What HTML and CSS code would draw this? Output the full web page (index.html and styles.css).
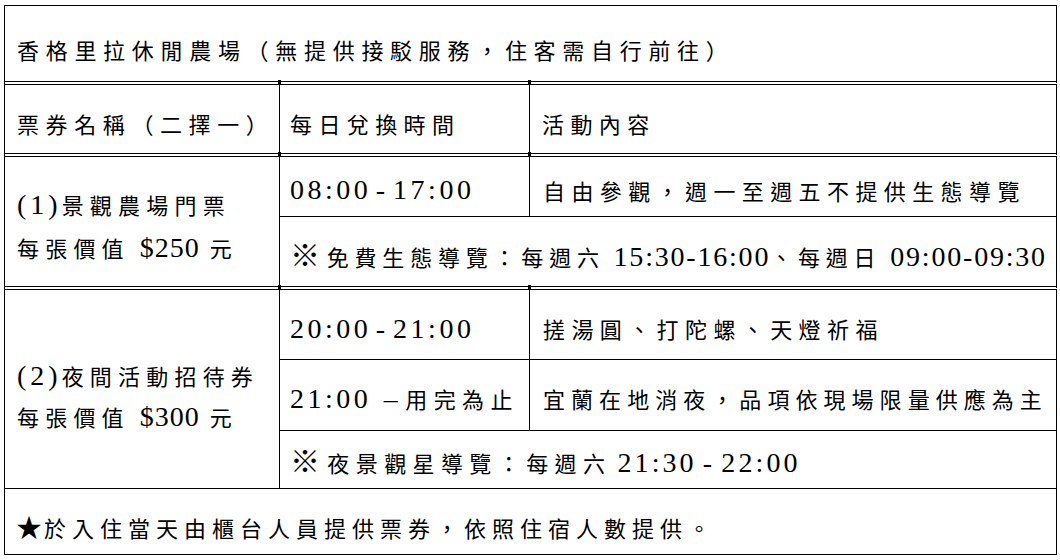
FILE: index.html
```html
<!DOCTYPE html>
<html lang="zh-Hant">
<head>
<meta charset="utf-8">
<title>香格里拉休閒農場</title>
<link rel="stylesheet" href="styles.css">
</head>
<body>
<div class="sheet">
  <div class="cell full title"><div class="tx">香格里拉休閒農場（無提供接駁服務，住客需自行前往）</div></div>

  <div class="cell head c1 dot-tr dot-br"><div class="tx">票券名稱（二擇一）</div></div>
  <div class="cell head c2 dot-tr dot-br"><div class="tx">每日兌換時間</div></div>
  <div class="cell head c3"><div class="tx">活動內容</div></div>

  <div class="cell name b1"><div class="tx"><p><span class="en">(1)</span>景觀農場門票</p><p>每張價值<span class="en"> $250 </span>元</p></div></div>
  <div class="cell time t1"><div class="tx"><span class="en">08:00 - 17:00</span></div></div>
  <div class="cell act a1"><div class="tx">自由參觀，週一至週五不提供生態導覽</div></div>
  <div class="cell note n1"><div class="tx"><span class="mark">※</span> 免費生態導覽：每週六<span class="en"> 15:30-16:00</span>、每週日<span class="en"> 09:00-09:30</span></div></div>

  <div class="cell name b2 dot-tr"><div class="tx"><p><span class="en">(2)</span>夜間活動招待券</p><p>每張價值<span class="en"> $300 </span>元</p></div></div>
  <div class="cell time t2 dot-tr"><div class="tx"><span class="en">20:00 - 21:00</span></div></div>
  <div class="cell act a2"><div class="tx">搓湯圓、打陀螺、天燈祈福</div></div>
  <div class="cell time t3"><div class="tx"><span class="en">21:00 –</span>用完為止</div></div>
  <div class="cell act a3"><div class="tx">宜蘭在地消夜，品項依現場限量供應為主</div></div>
  <div class="cell note n2"><div class="tx"><span class="mark">※</span> 夜景觀星導覽：每週六<span class="en"> 21:30 - 22:00</span></div></div>

  <div class="cell full foot"><div class="tx"><span class="star">★</span>於入住當天由櫃台人員提供票券，依照住宿人數提供。</div></div>
</div>
</body>
</html>
```

FILE: styles.css
```css
html, body {
  margin: 0;
  padding: 0;
  background: #fff;
}

.sheet {
  display: grid;
  grid-template-columns: 275px 250px 527px;
  grid-template-rows: 79px 72px 60px 73px 70px 71px 58px 66px;
  width: max-content;
  margin: 5px 0 0 4px;
  border-top: 1px solid #000;
  border-left: 1px solid #000;
  font-family: "Noto Sans CJK TC", "Noto Sans CJK SC", sans-serif;
  font-size: 22px;
  line-height: 30px;
  letter-spacing: 6.4px;
  color: #000;
}

.cell {
  position: relative;
  box-sizing: border-box;
  display: flex;
  flex-direction: column;
  justify-content: center;
  border-right: 1px solid #000;
  border-bottom: 1px solid #000;
  padding: 7px 0 0 12px;
  white-space: nowrap;
}

.tx {
  display: block;
}

.cell p {
  margin: 0;
}

.en {
  font-family: "Liberation Serif", serif;
  font-size: 28px;
  letter-spacing: 3.5px;
  word-spacing: -6px;
}

.full { grid-column: 1 / 4; }

.title {
  grid-row: 1;
  border-bottom: 4px double #000;
  padding-top: 10px;
  letter-spacing: 6.7px;
}

.head {
  grid-row: 2;
  border-bottom: 4px double #000;
  padding-top: 8px;
}
.head.c1 { grid-column: 1; letter-spacing: 6.6px; }
.head.c2 { grid-column: 2; padding-left: 10px; }
.head.c3 { grid-column: 3; padding-left: 12px; }

.name {
  grid-column: 1;
  letter-spacing: 6.2px;
}
.name.b1 {
  grid-row: 3 / 5;
  border-bottom: 4px double #000;
  line-height: 42px;
  padding-top: 9px;
}
.name.b2 {
  grid-row: 5 / 8;
  line-height: 40px;
  padding-top: 14px;
}
.name .en { letter-spacing: 4px; word-spacing: -1px; }
.name p:last-child .en { letter-spacing: 1px; word-spacing: 2px; }

.time {
  grid-column: 2;
  padding-left: 10px;
}
.act {
  grid-column: 3;
  padding-left: 13px;
}

.t1, .a1 { grid-row: 3; padding-top: 6px; }
.n1 {
  grid-row: 4;
  grid-column: 2 / 4;
  border-bottom: 4px double #000;
  padding-left: 10px;
  padding-top: 6px;
  letter-spacing: 5.8px;
}
.n1 .en { letter-spacing: 1.8px; word-spacing: 0; }

.t2, .a2 { grid-row: 5; padding-top: 7px; }
.t3, .a3 { grid-row: 6; padding-top: 6px; }
.a3 { letter-spacing: 6.05px; }
.t3 .en { word-spacing: 2px; margin-right: 4px; }
.n2 {
  grid-row: 7;
  grid-column: 2 / 4;
  padding-left: 10px;
  padding-top: 3px;
}
.n2 .en { letter-spacing: 3.1px; word-spacing: -4px; }

.foot {
  grid-row: 8;
  padding-left: 11px;
  padding-top: 9px;
  letter-spacing: 6px;
}

.star {
  font-size: 26px;
  letter-spacing: 2px;
}

.mark {
  font-size: 30px;
  letter-spacing: -4px;
  line-height: 30px;
}

/* junction dots where vertical rules cross double rules */
.dot-tr::before,
.dot-br::after {
  content: "";
  position: absolute;
  right: -2px;
  width: 3px;
  height: 5px;
  background: #000;
}
.dot-tr::before { top: -5px; }
.dot-br::after { bottom: -4px; }
```
